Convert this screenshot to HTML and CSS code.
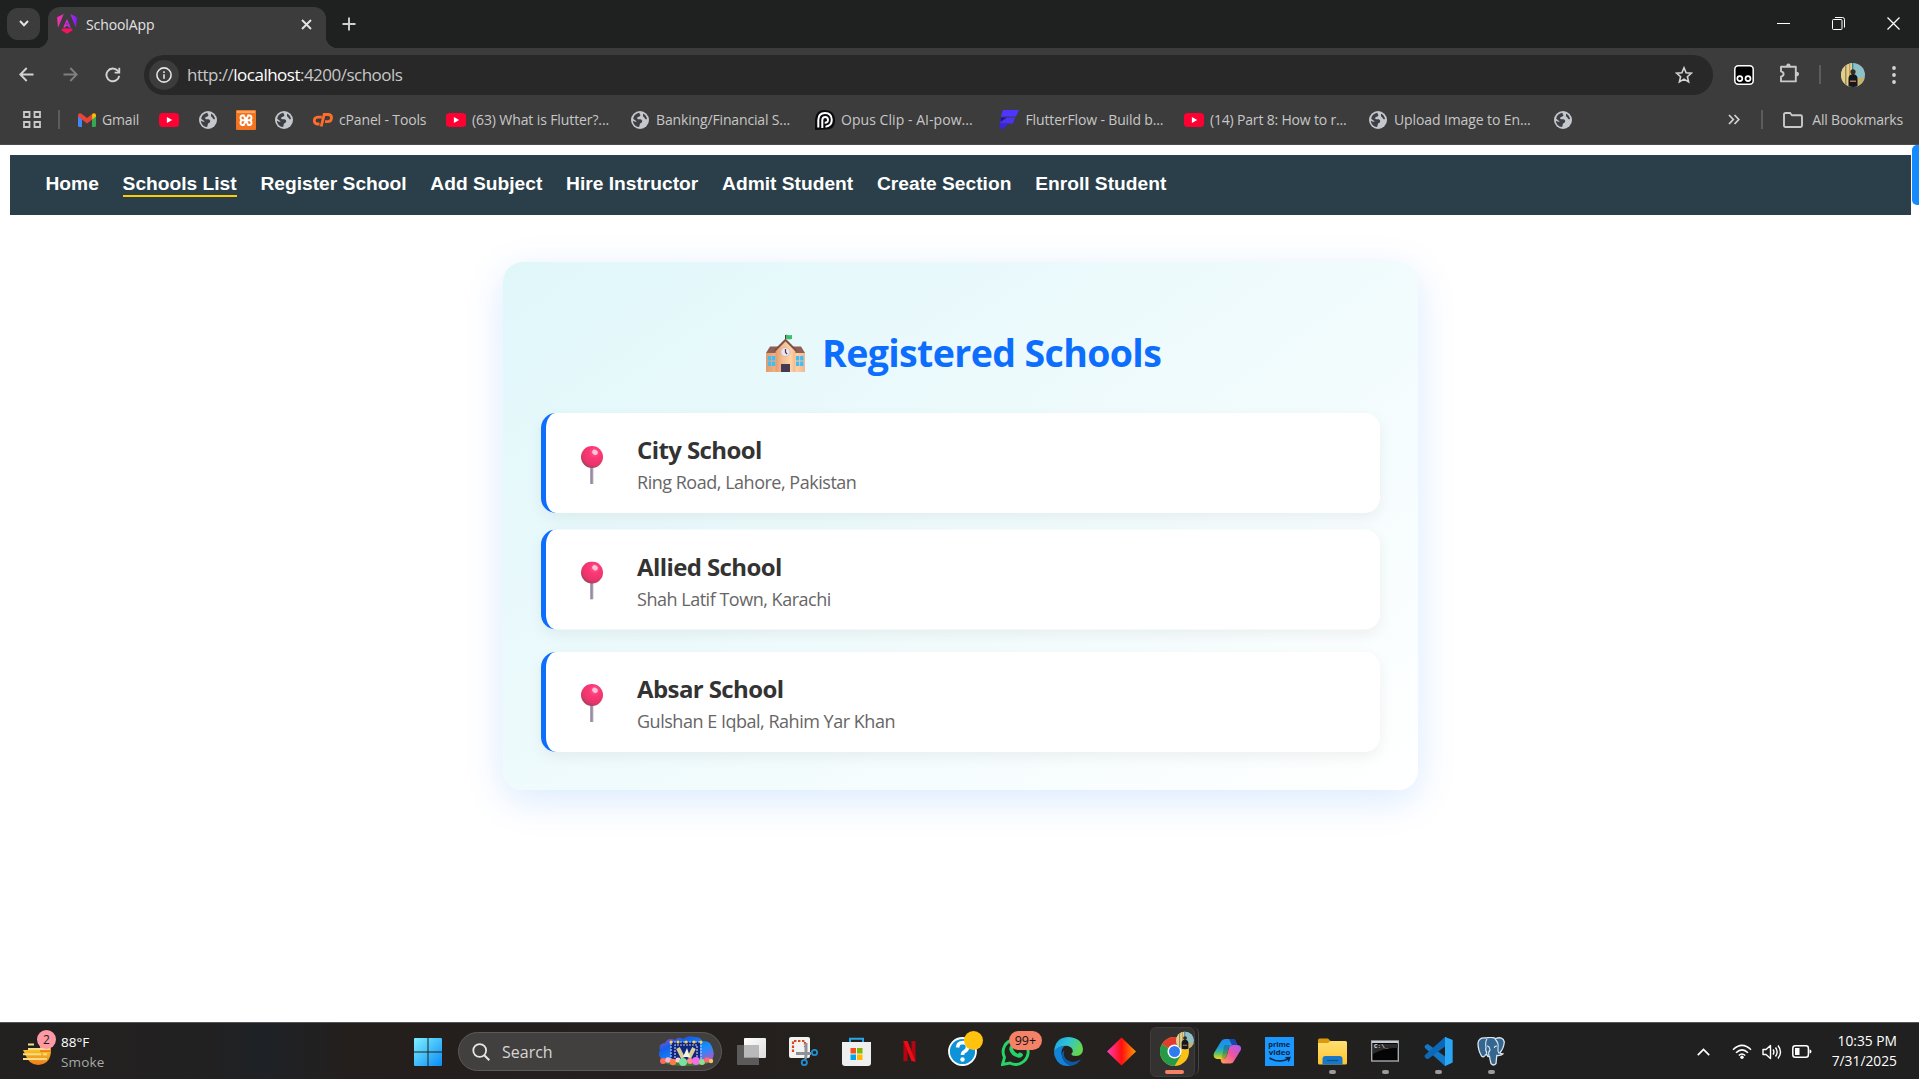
FILE: index.html
```html
<!DOCTYPE html>
<html lang="en">
<head>
<meta charset="utf-8">
<title>SchoolApp</title>
<link rel="stylesheet" href="styles.css">
</head>
<body>
<svg class="defs" width="0" height="0" aria-hidden="true">
  <defs>
    <linearGradient id="g-win" x1="0" y1="0" x2="1" y2="1"><stop offset="0" stop-color="#7df1ff"/><stop offset="1" stop-color="#0a8cf5"/></linearGradient>
    <linearGradient id="g-ang" x1="0" y1="0" x2="1" y2="0"><stop offset="0" stop-color="#fb2fa0"/><stop offset=".5" stop-color="#d92be0"/><stop offset="1" stop-color="#7a1cf5"/></linearGradient>
    <radialGradient id="g-pin" cx=".62" cy=".3" r=".75"><stop offset="0" stop-color="#ff5d92"/><stop offset=".35" stop-color="#fb3775"/><stop offset=".75" stop-color="#e8356b"/><stop offset="1" stop-color="#9c4157"/></radialGradient>
    <linearGradient id="g-wall" x1="0" y1="0" x2="1" y2="0"><stop offset="0" stop-color="#e39b6c"/><stop offset=".3" stop-color="#f2b98a"/><stop offset=".75" stop-color="#ffd5a3"/><stop offset="1" stop-color="#f0b795"/></linearGradient>
    <linearGradient id="g-edge" x1="0" y1="0" x2="1" y2=".4"><stop offset="0" stop-color="#1b9de2"/><stop offset=".5" stop-color="#2fc3d8"/><stop offset="1" stop-color="#63d64f"/></linearGradient>
    <linearGradient id="g-dia" x1="0" y1="0" x2="1" y2="0"><stop offset="0" stop-color="#ff3dbd"/><stop offset=".5" stop-color="#ff1010"/><stop offset="1" stop-color="#ff9a00"/></linearGradient>
    <linearGradient id="g-cop1" x1="0" y1="0" x2="0" y2="1"><stop offset="0" stop-color="#1c8cf0"/><stop offset=".45" stop-color="#1c9ed8"/><stop offset=".7" stop-color="#4fc070"/><stop offset="1" stop-color="#f2d90f"/></linearGradient>
    <linearGradient id="g-cop2" x1="1" y1="0" x2="0" y2="1"><stop offset="0" stop-color="#a85bf5"/><stop offset=".5" stop-color="#f0569d"/><stop offset="1" stop-color="#ffa64d"/></linearGradient>
    <linearGradient id="g-sun" x1="0" y1="0" x2="0" y2="1"><stop offset="0" stop-color="#f7c325"/><stop offset="1" stop-color="#ef7a1a"/></linearGradient>
    <linearGradient id="g-fold" x1="0" y1="0" x2="0" y2="1"><stop offset="0" stop-color="#ffdf73"/><stop offset="1" stop-color="#ffc42e"/></linearGradient>
    <linearGradient id="g-cloud" x1="0" y1="0" x2="1" y2="1"><stop offset="0" stop-color="#b04ad0"/><stop offset=".3" stop-color="#1560e8"/><stop offset=".65" stop-color="#1790ff"/><stop offset="1" stop-color="#c04fc8"/></linearGradient>
    <linearGradient id="g-tv" x1="0" y1="0" x2="1" y2="1"><stop offset="0" stop-color="#fff"/><stop offset="1" stop-color="#dcdcdc"/></linearGradient>
    <symbol id="globe" viewBox="0 0 18 18"><circle cx="9" cy="9" r="9" fill="#c4c7cc"/><path d="M8.600 1.700C8 3 9.600 3.400 9.400 4.600 9 6 6.700 5.500 6.200 7c-.3 1.100.6 1.300 2 1.300 2 0 3.200.5 3 2.200-.2 1.500-2.400 1.500-2.500 3-.1 1.100-.4 2.300-.7 2.600C4.500 15.600 2 12.900 1.900 9.700c1.200.6 2.700 1.300 3.700 1.200-.2-1.600-2.500-1.700-3.400-3.100C2.600 4.600 5 2 8.600 1.700zM12 2.500c2.200 1 3.700 3.200 4 5.600-1.100.7-1.900-.3-2.300-1.200-.4-1-1.400-.9-1.700-2-.2-.9.300-1.600 0-2.400z" fill="#3c3f43"/></symbol>
    <symbol id="yt" viewBox="0 0 20 14"><rect width="20" height="14" rx="3.500" fill="#ff0033"/><path d="M7.900 4l5.300 3-5.300 3z" fill="#fff"/></symbol>
    <symbol id="pin" viewBox="0 0 22 38"><rect x="9.500" y="20" width="2.800" height="18" fill="#a79ab1"/><rect x="9.500" y="20" width="1" height="18" fill="#8a7a97"/><circle cx="11" cy="11" r="11" fill="url(#g-pin)"/><ellipse cx="14" cy="6.300" rx="2.900" ry="2.500" fill="#ffc4d8" transform="rotate(30 14 6.300)"/></symbol>
    <symbol id="me" viewBox="0 0 24 24"><clipPath id="c-me"><circle cx="12" cy="12" r="12"/></clipPath><g clip-path="url(#c-me)"><rect width="24" height="24" fill="#8fc0c6"/><rect width="11.500" height="24" fill="#e3cf8c"/><rect x="4" width="1.500" height="24" fill="#a58a4f"/><rect x="8" width="1.200" height="24" fill="#b99c5f"/><rect x="11" width="1.300" height="14" fill="#2f86a0"/><path d="M13 15h11v9H13z" fill="#c9b06c"/><circle cx="12" cy="8.800" r="2.600" fill="#3b2a22"/><path d="M7.500 24V15.500q0-4 4.500-4.500 4.500.5 4.500 4.500V24z" fill="#14171c"/><path d="M9 17.500h6v1.600H9z" fill="#b07a58"/></g></symbol>
  </defs>
</svg>

<div class="browser">
  <div class="tabstrip">
    <button class="tab-search"><svg width="10" height="7" viewBox="0 0 10 7"><path d="M1 1l4 4.300L9 1" fill="none" stroke="#e3e3e3" stroke-width="2"/></svg></button>
    <div class="tab">
      <svg width="20" height="20" viewBox="0 0 20 20"><path d="M6.800 0L0 3.200l1 10.600zM13.200 0L20 3.200l-1 10.600zM10 5L6.200 13.600h2.100l.6-1.700h2.200l.6 1.700h2.100zM10 8.200l.9 2.200H9.100z" fill="url(#g-ang)" fill-rule="evenodd"/><path d="M4.300 16.300L10 19.800l5.700-3.500-1-1.800H5.300z" fill="#f5125f"/></svg>
      <span class="tab-title">SchoolApp</span>
      <svg class="tab-x" width="11" height="11" viewBox="0 0 11 11"><path d="M1 1l9 9M10 1l-9 9" stroke="#e3e3e3" stroke-width="1.900"/></svg>
    </div>
    <svg class="newtab" width="14" height="14" viewBox="0 0 14 14"><path d="M7 .5v13M.5 7h13" stroke="#cfcfcf" stroke-width="1.900"/></svg>
    <div class="winbtns">
      <svg width="13" height="13" viewBox="0 0 13 13"><path d="M0 6.500h13" stroke="#fff"/></svg>
      <svg width="13" height="13" viewBox="0 0 13 13"><rect x=".5" y="2.500" width="9.500" height="10" rx="1" fill="none" stroke="#fff"/><path d="M3 .5h7.500q2 0 2 2v8" fill="none" stroke="#fff"/></svg>
      <svg width="13" height="13" viewBox="0 0 13 13"><path d="M.5.5l12 12M12.500.5l-12 12" stroke="#fff" stroke-width="1.300"/></svg>
    </div>
  </div>

  <div class="toolbar">
    <svg width="15" height="15" viewBox="0 0 15 15"><path d="M14.500 7.500H1.500M7.700 1L1.300 7.500 7.700 14" fill="none" stroke="#d3d3d3" stroke-width="1.900"/></svg>
    <svg width="15" height="15" viewBox="0 0 15 15"><path d="M.5 7.500h13M7.300 1l6.400 6.500L7.300 14" fill="none" stroke="#7f7f7f" stroke-width="1.900"/></svg>
    <svg width="16" height="16" viewBox="0 0 16 16"><path d="M14.200 8.800A6.400 6.400 0 1 1 12.700 3.700L14.300 5.300" fill="none" stroke="#d3d3d3" stroke-width="1.900"/><path d="M15.200.8V6.500H9.600V4.700h3.800V.8z" fill="#d3d3d3"/></svg>
    <div class="omnibox">
      <span class="info"><svg width="16" height="16" viewBox="0 0 16 16"><circle cx="8" cy="8" r="7.100" fill="none" stroke="#e3e3e3" stroke-width="1.600"/><path d="M7.200 7.200h1.600v4.600H7.200zM7.200 4.200h1.600v1.700H7.200z" fill="#e3e3e3"/></svg></span>
      <span class="url">http://<b>localhost</b>:4200/schools</span>
      <svg class="star" width="18" height="18" viewBox="0 0 18 18"><path d="M9 1.800l2.100 4.900 5.300.5-4 3.500 1.200 5.200L9 13.100l-4.600 2.800 1.200-5.200-4-3.500 5.300-.5z" fill="none" stroke="#d3d3d3" stroke-width="1.600"/></svg>
    </div>
    <svg class="tm" width="20" height="20" viewBox="0 0 20 20"><rect x=".8" y=".8" width="18.400" height="18.400" rx="3.500" fill="#000" stroke="#fff" stroke-width="1.500"/><circle cx="5.800" cy="13.600" r="2.500" fill="none" stroke="#fff" stroke-width="1.700"/><circle cx="14" cy="13.600" r="2.500" fill="none" stroke="#fff" stroke-width="1.700"/></svg>
    <svg class="puzzle" width="21" height="21" viewBox="0 0 21 21"><path d="M2 3.800h14.800v14.600H2v-4.600q2.600-.6 2.600-2.700T2 8.400z" fill="none" stroke="#c9c9c9" stroke-width="1.900" stroke-linejoin="round"/><path d="M7.200 3.500q0-3 2.200-3t2.200 3zM17 8.800q3 0 3 2.300t-3 2.300z" fill="#c9c9c9"/></svg>
    <i class="sep"></i>
    <svg class="avatar" width="24" height="24"><use href="#me"/></svg>
    <svg class="kebab" width="4" height="18" viewBox="0 0 4 18"><circle cx="2" cy="2" r="1.900" fill="#d3d3d3"/><circle cx="2" cy="9" r="1.900" fill="#d3d3d3"/><circle cx="2" cy="16" r="1.900" fill="#d3d3d3"/></svg>
  </div>

  <div class="bookmarks">
    <svg class="apps" width="18" height="17" viewBox="0 0 18 17"><path d="M1 1h5.500v5H1zM11.500 1H17v5h-5.500zM1 11h5.500v5H1zM11.500 11H17v5h-5.500z" fill="none" stroke="#c9c9c9" stroke-width="1.800"/></svg>
    <i class="sep"></i>
    <span class="bm w81"><svg width="18" height="14" viewBox="0 0 18 14"><path d="M0 2.500V12.500Q0 14 1.500 14H4V6z" fill="#4285f4"/><path d="M18 2.500V12.500Q18 14 16.500 14H14V6z" fill="#34a853"/><path d="M14 1.200L14 6.500 18 3.500V2Q17.500-.8 14.800.6z" fill="#fbbc04"/><path d="M0 2Q.5-.8 3.200.6L9 5l5.200-4v5.500L9 10.400 0 3.500z" fill="#ea4335"/></svg><span class="t-gmail">Gmail</span></span>
    <span class="bm w40"><svg width="20" height="14"><use href="#yt"/></svg></span>
    <span class="bm w37"><svg width="18" height="18"><use href="#globe"/></svg></span>
    <span class="bm w39"><svg width="20" height="20" viewBox="0 0 20 20"><rect width="20" height="20" rx="1" fill="#f27421"/><path d="M1 1h18v2H1z" fill="#f9a566"/><path d="M6.500 5.500h1.300L12.200 15h1.300q2 0 2-2.200t-2-2.500q2-.3 2-2.500t-2-2.300h-1.300L7.800 15H6.500q-2 0-2-2.200t2-2.500q-2-.3-2-2.500t2-2.300zM6.500 10.300h7" fill="none" stroke="#fff" stroke-width="1.900"/></svg></span>
    <span class="bm w38"><svg width="18" height="18"><use href="#globe"/></svg></span>
    <span class="bm w133"><svg width="20" height="14" viewBox="0 0 20 14"><path d="M8.800 4.200H4.700Q1.500 4.500 1.300 7.500T4.300 11H6.500M8.200 13.500L11.200 1.500H15.500Q18.900 2 18.500 5.300T14.500 8.700H12" fill="none" stroke="#ff6c2c" stroke-width="2.800"/></svg><span class="t-cp">cPanel - Tools</span></span>
    <span class="bm w185"><svg width="20" height="14"><use href="#yt"/></svg><span class="t-flutter">(63) What is Flutter?...</span></span>
    <span class="bm w184"><svg width="18" height="18"><use href="#globe"/></svg><span class="t-bank">Banking/Financial S...</span></span>
    <span class="bm w184"><svg width="20" height="20" viewBox="0 0 20 20"><path d="M0 20V9.500Q.5 0 10 0t10 10-10 9.500z" fill="#0b0b0d"/><path d="M3.300 17.500V10Q3.500 3 10 3t6.800 6.800q0 6.200-6.300 6.900" fill="none" stroke="#fff" stroke-width="2"/><path d="M7.300 18V10q.2-3 2.900-3t2.800 2.900-3.300 2.800" fill="none" stroke="#fff" stroke-width="2"/></svg><span class="t-opus">Opus Clip - AI-pow...</span></span>
    <span class="bm w185"><svg width="20" height="20" viewBox="0 0 20 20"><path d="M4 0h16l-3 6.500H1.800z" fill="#4d36ff"/><path d="M2 7.500h14.300l-2.500 6H1z" fill="#4a33f5"/><path d="M2 7.500h6L1.500 12z" fill="#24158f"/><path d="M1 13.500h8.500L3.500 20 0 16z" fill="#3a24d8"/></svg><span class="t-ff">FlutterFlow - Build b...</span></span>
    <span class="bm w185"><svg width="20" height="14"><use href="#yt"/></svg><span class="t-part">(14) Part 8: How to r...</span></span>
    <span class="bm w185"><svg width="18" height="18"><use href="#globe"/></svg><span class="t-up">Upload Image to En...</span></span>
    <span class="bm"><svg width="18" height="18"><use href="#globe"/></svg></span>
    <svg class="more" width="12" height="11" viewBox="0 0 12 11"><path d="M1 1l4.300 4.500L1 10M6.500 1l4.300 4.500L6.500 10" fill="none" stroke="#d3d3d3" stroke-width="1.700"/></svg>
    <i class="sep"></i>
    <svg class="folder" width="20" height="16" viewBox="0 0 20 16"><path d="M1 2.500Q1 1 2.500 1H7l2 2.300h8.500Q19 3.300 19 4.800V13.500Q19 15 17.500 15h-15Q1 15 1 13.500z" fill="none" stroke="#c9c9c9" stroke-width="1.900"/></svg>
    <span class="t-all">All Bookmarks</span>
  </div>
</div>

<main class="page">
  <nav class="nav">
    <a>Home</a><a class="active">Schools List</a><a>Register School</a><a>Add Subject</a><a>Hire Instructor</a><a>Admit Student</a><a>Create Section</a><a>Enroll Student</a>
  </nav>
  <div class="side-handle"></div>

  <section class="card">
    <h1 class="title">
      <svg width="39" height="38" viewBox="0 0 39 38"><path d="M19 1h1v8h-1z" fill="#4f3b3b"/><path d="M20 .5q3 1 6 .5v4q-3 .8-6 0z" fill="#3fbf6b"/><path d="M4 12.500h31l4 6.500H0z" fill="#8f5f55"/><path d="M0 19h39v19H0z" fill="url(#g-wall)"/><path d="M9.500 16.500L19.500 6.500 29.500 16.500V38H9.500z" fill="url(#g-wall)"/><path d="M8.500 17L19.500 6 30.500 17" fill="none" stroke="#7d5049" stroke-width="2"/><circle cx="19.500" cy="18" r="4.600" fill="#eee4f1" stroke="#cbb0b8" stroke-width=".8"/><path d="M19.500 15v3.300l1.600 1.700" fill="none" stroke="#4a3540" stroke-width="1.200"/><path d="M15 30h9v8h-9z" fill="#453a55"/><path d="M1.800 22h3.300v4.500H1.800zM5.900 22h3.300v4.500H5.900zM1.800 27.400h3.300v4.500H1.800zM5.900 27.400h3.300v4.500H5.900zM30 22h3.300v4.500H30zM34.100 22h3.300v4.500h-3.300zM30 27.400h3.300v4.500H30zM34.100 27.400h3.300v4.500h-3.300z" fill="#3fbdf5"/></svg>
      <span>Registered Schools</span>
    </h1>
    <ul class="list">
      <li class="item"><svg width="22" height="38"><use href="#pin"/></svg><div><h2>City School</h2><p>Ring Road, Lahore, Pakistan</p></div></li>
      <li class="item raised"><svg width="22" height="38"><use href="#pin"/></svg><div><h2>Allied School</h2><p>Shah Latif Town, Karachi</p></div></li>
      <li class="item"><svg width="22" height="38"><use href="#pin"/></svg><div><h2>Absar School</h2><p>Gulshan E Iqbal, Rahim Yar Khan</p></div></li>
    </ul>
  </section>
</main>

<footer class="taskbar">
  <div class="weather">
    <div class="wicon">
      <svg width="29" height="29" viewBox="0 0 29 29"><path d="M0 13h28q0 14-13 15Q6 28 2 17z" fill="url(#g-sun)"/><path d="M17 7h11v8H17z" fill="url(#g-sun)"/><path d="M5 7.500h6M5 12h22M0 17.200h18M20 17.200h4M0 22h24" stroke="#f9dc86" stroke-width="2"/></svg>
      <span class="badge2">2</span>
    </div>
    <div class="wtext"><span class="temp">88°F</span><span class="cond">Smoke</span></div>
  </div>
  <svg class="start" width="28" height="28" viewBox="0 0 28 28"><path d="M1 0h12.500v13.500H0V1q0-1 1-1zM14.500 0H27q1 0 1 1v12.500H14.500zM0 14.500h13.500V28H1q-1 0-1-1zM14.500 14.500H28V27q0 1-1 1H14.500z" fill="url(#g-win)"/></svg>
  <div class="search">
    <svg width="18" height="18" viewBox="0 0 18 18"><circle cx="7.700" cy="7.500" r="6.400" fill="none" stroke="#e6e6e6" stroke-width="1.800"/><path d="M12.300 12.200l5 5" stroke="#e6e6e6" stroke-width="2"/></svg>
    <span>Search</span>
    <svg class="stage" width="56" height="31" viewBox="0 0 56 31"><path d="M5 24Q-1 20 2 14 0 8 7 7 10 1 17 4 21 0 25 3 30-1 37 1q6 0 7 4 8-1 10 6 4 8-1 14z" fill="url(#g-cloud)"/><path d="M13 6h29v18H13z" fill="#10257c"/><path d="M13 24V6h30v18M17 22V9h22v13" fill="none" stroke="#b9c6f2" stroke-width="1.200" stroke-dasharray="2 1"/><path d="M20 12l5 10M36 12l-5 10" stroke="#d8cf98" stroke-width="4"/><path d="M29 12l-4 9h7z" fill="#f4f2e4"/><circle cx="13" cy="6" r="1.500" fill="#ffd23b"/><circle cx="20" cy="6" r="1.500" fill="#ffd23b"/><circle cx="28" cy="6" r="1.500" fill="#ffd23b"/><circle cx="36" cy="6" r="1.500" fill="#ffd23b"/><circle cx="43" cy="6" r="1.500" fill="#ffd23b"/><path d="M3 26h50q-8 4-25 4T3 26z" fill="#3d7a2e"/><circle cx="5" cy="25" r="3" fill="#ff6a5c"/><circle cx="10" cy="24" r="2.800" fill="#f7b6d0"/><circle cx="15" cy="26" r="3.200" fill="#ff7a45"/><circle cx="20" cy="24" r="2.600" fill="#ffd0dc"/><circle cx="25" cy="26" r="4" fill="#7be0a0"/><circle cx="32" cy="25" r="3" fill="#ff8a8a"/><circle cx="38" cy="25" r="4" fill="#ee6fe8"/><circle cx="44" cy="26" r="3" fill="#8fe08a"/><circle cx="49" cy="24" r="2.800" fill="#ff6a6a"/><circle cx="53" cy="25" r="2.200" fill="#f7c66a"/></svg>
  </div>
  <div class="apps-row">
    <svg width="29" height="29" viewBox="0 0 29 29"><rect x="7" y="1" width="22" height="20" rx="1" fill="url(#g-tv)"/><path d="M0 8h22v20H1q-1 0-1-1z" fill="#666" fill-opacity=".85"/><path d="M7 8h15v12.500H7z" fill="#b9b9b9"/></svg>
    <svg width="29" height="29" viewBox="0 0 29 29"><rect width="21" height="21" rx="2" fill="#f2f2f2"/><path d="M4 15V4h12v6" fill="none" stroke="#d8481c" stroke-width="2.200" stroke-dasharray="2.400 1.600"/><path d="M17 6v12q0 3-1 4M7 16.500h15" fill="none" stroke="#8d9299" stroke-width="3"/><circle cx="25.500" cy="15.500" r="2.600" fill="none" stroke="#1e90d6" stroke-width="1.800"/><circle cx="15.300" cy="25.500" r="2.600" fill="none" stroke="#1e90d6" stroke-width="1.800"/></svg>
    <svg width="29" height="29" viewBox="0 0 29 29"><path d="M8 6V1.800h13V6" fill="none" stroke="#25a8e8" stroke-width="2"/><path d="M0 5h29v21q0 3-3 3H3q-3 0-3-3z" fill="#efefef"/><path d="M8.500 11H14v5.500H8.500z" fill="#f25022"/><path d="M15 11h5.500v5.500H15z" fill="#7fba00"/><path d="M8.500 17.500H14V23H8.500z" fill="#00a4ef"/><path d="M15 17.500h5.500V23H15z" fill="#ffb900"/></svg>
    <svg width="29" height="29" viewBox="0 0 29 29"><path d="M8.500 4h4v20l-4 .5zM16.500 4h4v20.500l-4-.5z" fill="#b1060f"/><path d="M8.500 4h4l8 20.500-4-.5z" fill="#ee0c17"/></svg>
    <div class="app"><svg width="29" height="29" viewBox="0 0 29 29"><circle cx="14.500" cy="14.500" r="13.500" fill="#0f93d8" stroke="#fff" stroke-width="1.800"/><path d="M9.500 10.500q.5-5 5.300-5 4.700.3 4.700 4.500 0 3-3 4.500-2 1-2 3.500" fill="none" stroke="#fff" stroke-width="3.600"/><circle cx="14.500" cy="22.500" r="2.200" fill="#fff"/></svg><i class="ydot"></i></div>
    <div class="app"><svg width="29" height="29" viewBox="0 0 29 29"><path d="M1.500 27.500l2-7A12.500 12.500 0 1 1 9 26z" fill="none" stroke="#25d366" stroke-width="2.900"/><path d="M9.500 8.500q1.500-1.500 3 .8.800 1.500-.6 2.700 1.800 3.600 5 4.900 1.300-2 3-1.200 2.600 1.300 2 2.700-1.700 3-5 2.200-7.400-2-8.600-8-.2-2.600 1.200-4.100z" fill="#25d366"/></svg><span class="b99">99+</span></div>
    <svg width="29" height="29" viewBox="0 0 29 29"><path d="M0 15Q1 0 15 0q13 1 14 12 0 6.500-7 7-5 0-4.500-2.500 2-1.500 1-4Q16 8 10 9 3 10 0 15z" fill="url(#g-edge)"/><path d="M0 15Q3 9 10.500 9.300 7 12 7.500 17 9 27 18 28.500 5 31 1 20 0 18 0 15z" fill="#1284d8"/><path d="M10.500 13Q8 20 14 23.500t13-1.500Q24 27.500 18 28.700 9 27.500 7.600 18 8 14.500 10.500 13z" fill="#0c59a4"/></svg>
    <svg width="29" height="29" viewBox="0 0 29 29"><path d="M14.500.5l14.500 14-14.500 14L0 14.500z" fill="url(#g-dia)"/></svg>
    <div class="app chrome"><svg width="29" height="29" viewBox="0 0 29 29"><circle cx="14.500" cy="14.500" r="14.500" fill="#fbc116"/><path d="M14.500 14.500L27.060 7.250A14.500 14.500 0 0 0 1.940 7.250z" fill="#e33b2e"/><path d="M14.500 7H27L14.500 14.500z" fill="#e33b2e"/><path d="M1.940 7.250A14.500 14.500 0 0 0 14.500 29L21 18.200 14.500 14.500z" fill="#269a49"/><circle cx="14.500" cy="14.500" r="7" fill="#fff"/><circle cx="14.500" cy="14.500" r="5.500" fill="#2f7bf0"/></svg><svg class="mini" width="18" height="19"><use href="#me"/></svg><i class="run"></i></div>
    <svg width="29" height="29" viewBox="0 0 29 29"><path d="M8 4.500Q9 2 12 2h8q2.500.3 3.300 4L24 8h-4.500q-3 .3-4 4l-2 7q-1 3-4 3H4Q-.5 21 1 16z" fill="url(#g-cop1)"/><path d="M16 2h4q2.500.3 3.300 4L24 8h-5z" fill="#1648b0"/><path d="M21 24q-1 2.500-4 2.600H10q-2-.6-2.500-4.600H10q3-.5 4-4l2-7q1-3 4-3h4.500q4.500.5 3.300 5z" fill="url(#g-cop2)"/><path d="M11.500 8h5l-3.800 13.500H8.500z" fill="#201f1e" opacity=".25"/></svg>
    <svg width="29" height="29" viewBox="0 0 29 29"><path d="M0 0h29v29H0z" fill="#1a98ff"/><text class="pv"><tspan x="3.200" y="9.500" textLength="22" lengthAdjust="spacingAndGlyphs">prime</tspan><tspan x="3.800" y="18" textLength="21.500" lengthAdjust="spacingAndGlyphs">video</tspan></text><path d="M4.500 21q9.500 5.500 19 .8M20.500 20.800l4.300-.2-1.500 4" fill="none" stroke="#0b2540" stroke-width="1.500"/></svg>
    <div class="app"><svg width="29" height="29" viewBox="0 0 29 29"><path d="M0 3q0-1.500 1.500-1.500H10L12.500 4v5H0z" fill="#d99a0c"/><path d="M0 6H10L12.500 4h15Q29 4 29 5.500V26q0 1.500-1.500 1.500h-26Q0 27.500 0 26z" fill="url(#g-fold)"/><path d="M4.500 27.500V22q0-3 3-3h14q3 0 3 3v5.500z" fill="#1878c8"/><path d="M9 23.500h11" stroke="#0b4e8e" stroke-width="1.200"/></svg><i class="dot"></i></div>
    <div class="app"><svg width="29" height="29" viewBox="0 0 29 29"><rect x=".7" y="4" width="26.600" height="20" fill="#050505" stroke="#a5a9ae" stroke-width="1.400"/><path d="M1 4h26v2H1z" fill="#c9ccd0"/><path d="M2 17Q14 10 27 11V7H2z" fill="#2b2b2b"/><text x="3" y="11" class="cmd">C:\_</text></svg><i class="dot"></i></div>
    <div class="app"><svg width="29" height="29" viewBox="0 0 29 29"><path d="M21 0l7.500 3v22.500L21 29 1 11q-1-1.200 0-2.300l1.500-1.300q1-.7 2 0L21 19.500z" fill="#1478c8"/><path d="M21 0v9.500L4.500 21.700q-1 .7-2 0L1 20.300q-1-1.200 0-2.300z" fill="#0d68b8"/><path d="M21 0l7.500 3v22.500L21 29z" fill="#2ba6f2"/></svg><i class="dot"></i></div>
    <div class="app"><svg width="29" height="29" viewBox="0 0 29 29"><path d="M9 1Q2 0 1 6q0 7 3.500 13 2 2 4-1l1-1q1 3 3 2.500.5 3 1.500 7 2.500 3 5 0l.8-8q4 .5 6-1.500-2-.3-3-1 4-5 4.500-11Q26-1 18.500 1.500 14-.5 9 1z" fill="#336791" stroke="#dfe6ec" stroke-width="1.300"/><path d="M10 2Q8 5 9 10q-1 4 1 6M18 2q4 4 3 9-.5 3 1 5.500M12 19q-1-4 1-6-.5-4-3-4M20 9q-3 0-2.500 2" fill="none" stroke="#dfe6ec" stroke-width="1.100"/></svg><i class="dot"></i></div>
  </div>
  <div class="tray">
    <svg class="up" width="13" height="8" viewBox="0 0 13 8"><path d="M.8 7.200L6.500 1.500l5.700 5.700" fill="none" stroke="#fff" stroke-width="1.700"/></svg>
    <svg class="wifi" width="20" height="15" viewBox="0 0 20 15"><path d="M1 5.800Q10-3 19 5.800M4 8.700q6-5.700 12 0M6.800 11.500q3.200-3 6.400 0" fill="none" stroke="#fff" stroke-width="1.500"/><circle cx="10" cy="13.200" r="1.700" fill="#fff"/></svg>
    <svg class="vol" width="20" height="16" viewBox="0 0 20 16"><path d="M1 5.500h3l4.500-4v13L4 10.500H1z" fill="none" stroke="#fff" stroke-width="1.400" stroke-linejoin="round"/><path d="M11 5.500q1.800 2.500 0 5M13.500 3.500q3.300 4.500 0 9M16 1.500q5 6.500 0 13" fill="none" stroke="#fff" stroke-width="1.400"/></svg>
    <svg class="bat" width="20" height="13" viewBox="0 0 20 13"><rect x=".8" y=".8" width="15.600" height="11.400" rx="2.500" fill="none" stroke="#fff" stroke-width="1.500"/><path d="M3 3h4.500v7H3zM17.500 4.500q2 0 2 2t-2 2z" fill="#fff"/></svg>
    <div class="clock"><span class="time">10:35 PM</span><span class="date">7/31/2025</span></div>
  </div>
</footer>
</body>
</html>
```
FILE: styles.css
```css
* { box-sizing: border-box; }
body {
  margin: 0;
  width: 1919px;
  height: 1079px;
  overflow: hidden;
  display: flex;
  flex-direction: column;
  background: #fff;
  font-family: "Segoe UI", "Open Sans", "Noto Sans", sans-serif;
}
svg { display: block; flex: none; }
.defs { position: absolute; }
h1, h2, p, ul { margin: 0; padding: 0; }
span, a, h1, h2, p { white-space: nowrap; }

/* browser window */
.browser { height: 145px; background: #3c3c3c; border-bottom: 1px solid #4b4b4b; color: #c7c7c7; flex: none; }
.tabstrip { height: 48px; background: #1f2020; display: flex; align-items: flex-start; }
.tab-search { margin: 8px 0 0 7px; width: 33px; height: 32px; border: 0; border-radius: 11px; background: #3c3c3c; display: flex; align-items: center; justify-content: center; padding: 0 0 1px; }
.tab { position: relative; margin: 7px 0 0 8px; width: 278px; height: 41px; border-radius: 12px 12px 0 0; background: #3c3c3c; display: flex; align-items: center; padding: 0 14px 7px 9px; }
.tab::before, .tab::after { content: ""; position: absolute; bottom: 0; width: 12px; height: 12px; }
.tab::before { left: -12px; background: radial-gradient(circle at 0 0, transparent 12px, #3c3c3c 12.500px); }
.tab::after { right: -12px; background: radial-gradient(circle at 100% 0, transparent 12px, #3c3c3c 12.500px); }
.tab-title { margin: 1px 0 0 9px; font-size: 14px; color: #e3e3e3; letter-spacing: -.1px; }
.tab-x { margin-left: auto; }
.newtab { margin: 17px 0 0 16px; }
.winbtns { margin: 17px 19px 0 auto; display: flex; gap: 42px; }

.toolbar { height: 53px; display: flex; align-items: center; padding: 0 23px 0 19px; }
.toolbar > svg:nth-child(2) { margin-left: 29px; }
.toolbar > svg:nth-child(3) { margin-left: 27px; }
.omnibox { margin-left: 23px; width: 1569px; height: 40px; border-radius: 20px; background: #282828; display: flex; align-items: center; padding: 0 20px 0 5px; }
.info { width: 30px; height: 30px; border-radius: 50%; background: #3c3c3c; display: flex; align-items: center; justify-content: center; }
.url { margin-left: 8px; font-size: 17px; letter-spacing: -.51px; color: #c7c7c7; }
.url b { font-weight: 400; color: #fff; }
.star { margin-left: auto; }
.tm { margin-left: 21px; }
.puzzle { margin-left: 25px; margin-top: -2px; }
.sep { width: 2px; height: 19px; background: #5c5c5c; flex: none; }
.toolbar .sep { margin-left: 19px; }
.avatar { margin-left: 20px; }
.kebab { margin-left: auto; }

.bookmarks { height: 37px; display: flex; align-items: center; padding: 0 16px 0 23px; font-size: 14px; }
.bookmarks .apps + .sep { margin: 0 18px 0 17px; }
.bm { display: flex; align-items: center; gap: 7px; flex: none; }
.w81 { width: 81px; } .w40 { width: 40px; } .w37 { width: 37px; } .w39 { width: 39px; } .w38 { width: 38px; }
.w133 { width: 133px; } .w184 { width: 184px; } .w185 { width: 185px; }
.t-gmail, .t-cp { margin-left: -1px; letter-spacing: -.15px; }
.t-flutter { margin-left: -1px; letter-spacing: -.11px; }
.t-bank { letter-spacing: -.15px; }
.t-opus { margin-left: -1px; letter-spacing: .05px; }
.t-ff { margin-left: -.5px; letter-spacing: -.14px; }
.t-part { margin-left: -1px; letter-spacing: -.18px; }
.t-up { letter-spacing: -.11px; }
.t-all { letter-spacing: -.2px; }
.more { margin-left: auto; }
.more + .sep { margin: 0 20px 0 21px; }
.folder { margin-right: 9px; }

/* page */
.page { position: relative; flex: 1; padding: 10px 8px 0 10px; background: #fff; }
.nav { height: 60px; background: #2a3f4a; display: flex; gap: 23.800px; align-items: flex-start; padding: 14px 0 0 35.500px; font: bold 19.200px/29px Arial, "Liberation Sans", sans-serif; color: #fff; }
.nav .active { border-bottom: 2px solid #ffcc00; height: 28px; }
.side-handle { position: absolute; right: 0; top: 0; width: 7px; height: 60px; border-radius: 5px 0 0 5px; background: #148aff; }

.card { width: 915px; height: 528px; margin: 47px 0 0 493px; border-radius: 20px; padding: 0 38px; background: linear-gradient(145deg, #e0f7fa, #fff); box-shadow: 0 10px 38px rgba(0, 115, 255, .15); }
.title { display: flex; align-items: flex-start; height: 151px; padding: 72px 0 0 225px; color: #0d6efd; font-size: 37.500px; line-height: 40px; font-weight: 700; }
.title span { margin: -1px 0 0 17px; letter-spacing: -.62px; }
.list { list-style: none; display: flex; flex-direction: column; gap: 19.500px; }
.item { width: 839px; height: 100px; background: #fff; border-left: 5px solid #0d6efd; border-radius: 15px; box-shadow: 0 5px 15px rgba(0, 0, 0, .06); display: flex; padding: 32px 0 0 35px; }
.item:first-child svg { margin-top: 1px; }
.item div { margin: -12px 0 0 34px; }
.item.raised { transform: translateY(-3.500px); }
.item h2 { font-size: 24px; line-height: 34px; font-weight: 700; letter-spacing: -.6px; color: #333; }
.item p { font-size: 18px; line-height: 30px; letter-spacing: -.48px; color: #666; }

/* taskbar */
.taskbar { position: relative; height: 57px; border-top: 1px solid #56565a; flex: none; background: linear-gradient(90deg, #232120 0, #222121 200px, #1e2226 265px, #241f1d 350px, #25211f 1000px, #202020 1500px); display: flex; align-items: center; color: #fff; padding: 1px 22px 0 23px; }
.weather { width: 391px; display: flex; align-items: center; flex: none; }
.wicon { position: relative; width: 29px; height: 29px; }
.badge2 { position: absolute; left: 14px; top: -7px; width: 19px; height: 19px; border-radius: 50%; background: #ff99a4; color: #1d1d1d; font-size: 12px; line-height: 19px; text-align: center; }
.wtext { margin: 0 0 0 9px; display: flex; flex-direction: column; font-size: 13.500px; line-height: 20px; }
.cond { color: #a8a8a8; letter-spacing: .15px; }
.search { margin-left: 16px; width: 264px; height: 39px; border-radius: 20px; background: #42403e; border: 1px solid #5c5a58; display: flex; align-items: center; padding: 0 7px 0 13px; flex: none; font-size: 16px; color: #d6d6d6; }
.search span { margin-left: 12px; }
.stage { margin: -1px 0 0 auto; }
.apps-row { margin-left: 14.500px; display: flex; gap: 23.900px; flex: none; }
.app { position: relative; width: 29px; height: 29px; }
.app > svg { position: relative; }
.ydot { position: absolute; left: 16px; top: -6px; width: 19px; height: 19px; border-radius: 50%; background: #ffc20e; }
.b99 { position: absolute; left: 8px; top: -6px; width: 33px; height: 19px; border-radius: 10px; background: #f58267; color: #111; font-size: 12.500px; line-height: 19px; text-align: center; }
.chrome::before { content: ""; position: absolute; left: -10px; top: -10px; width: 43px; height: 48px; border-radius: 6px; background: #343230; border: 1px solid #3f3d3b; }
.chrome::after { content: ""; position: absolute; left: 30px; top: -10px; width: 8px; height: 48px; border-right: 1px solid #474543; border-radius: 0 6px 6px 0; }
.app > .mini { position: absolute; left: 16px; top: -6px; }
.run { position: absolute; left: 5px; top: 33px; width: 19px; height: 4px; border-radius: 2px; background: #f58267; }
.dot { position: absolute; left: 11px; top: 33px; width: 7px; height: 4px; border-radius: 2px; background: #9a9a9a; }
.pv { font: bold 7px "Open Sans", sans-serif; fill: #0b2540; }
.cmd { font: bold 6px "Liberation Mono", monospace; fill: #ddd; }
.tray { margin-left: auto; display: flex; align-items: center; }
.wifi { margin-left: 22px; }
.vol { margin-left: 10px; }
.bat { margin-left: 10px; }
.clock { margin: -2px 0 0 20px; display: flex; flex-direction: column; align-items: flex-end; font-size: 13.800px; line-height: 20px; }
```
